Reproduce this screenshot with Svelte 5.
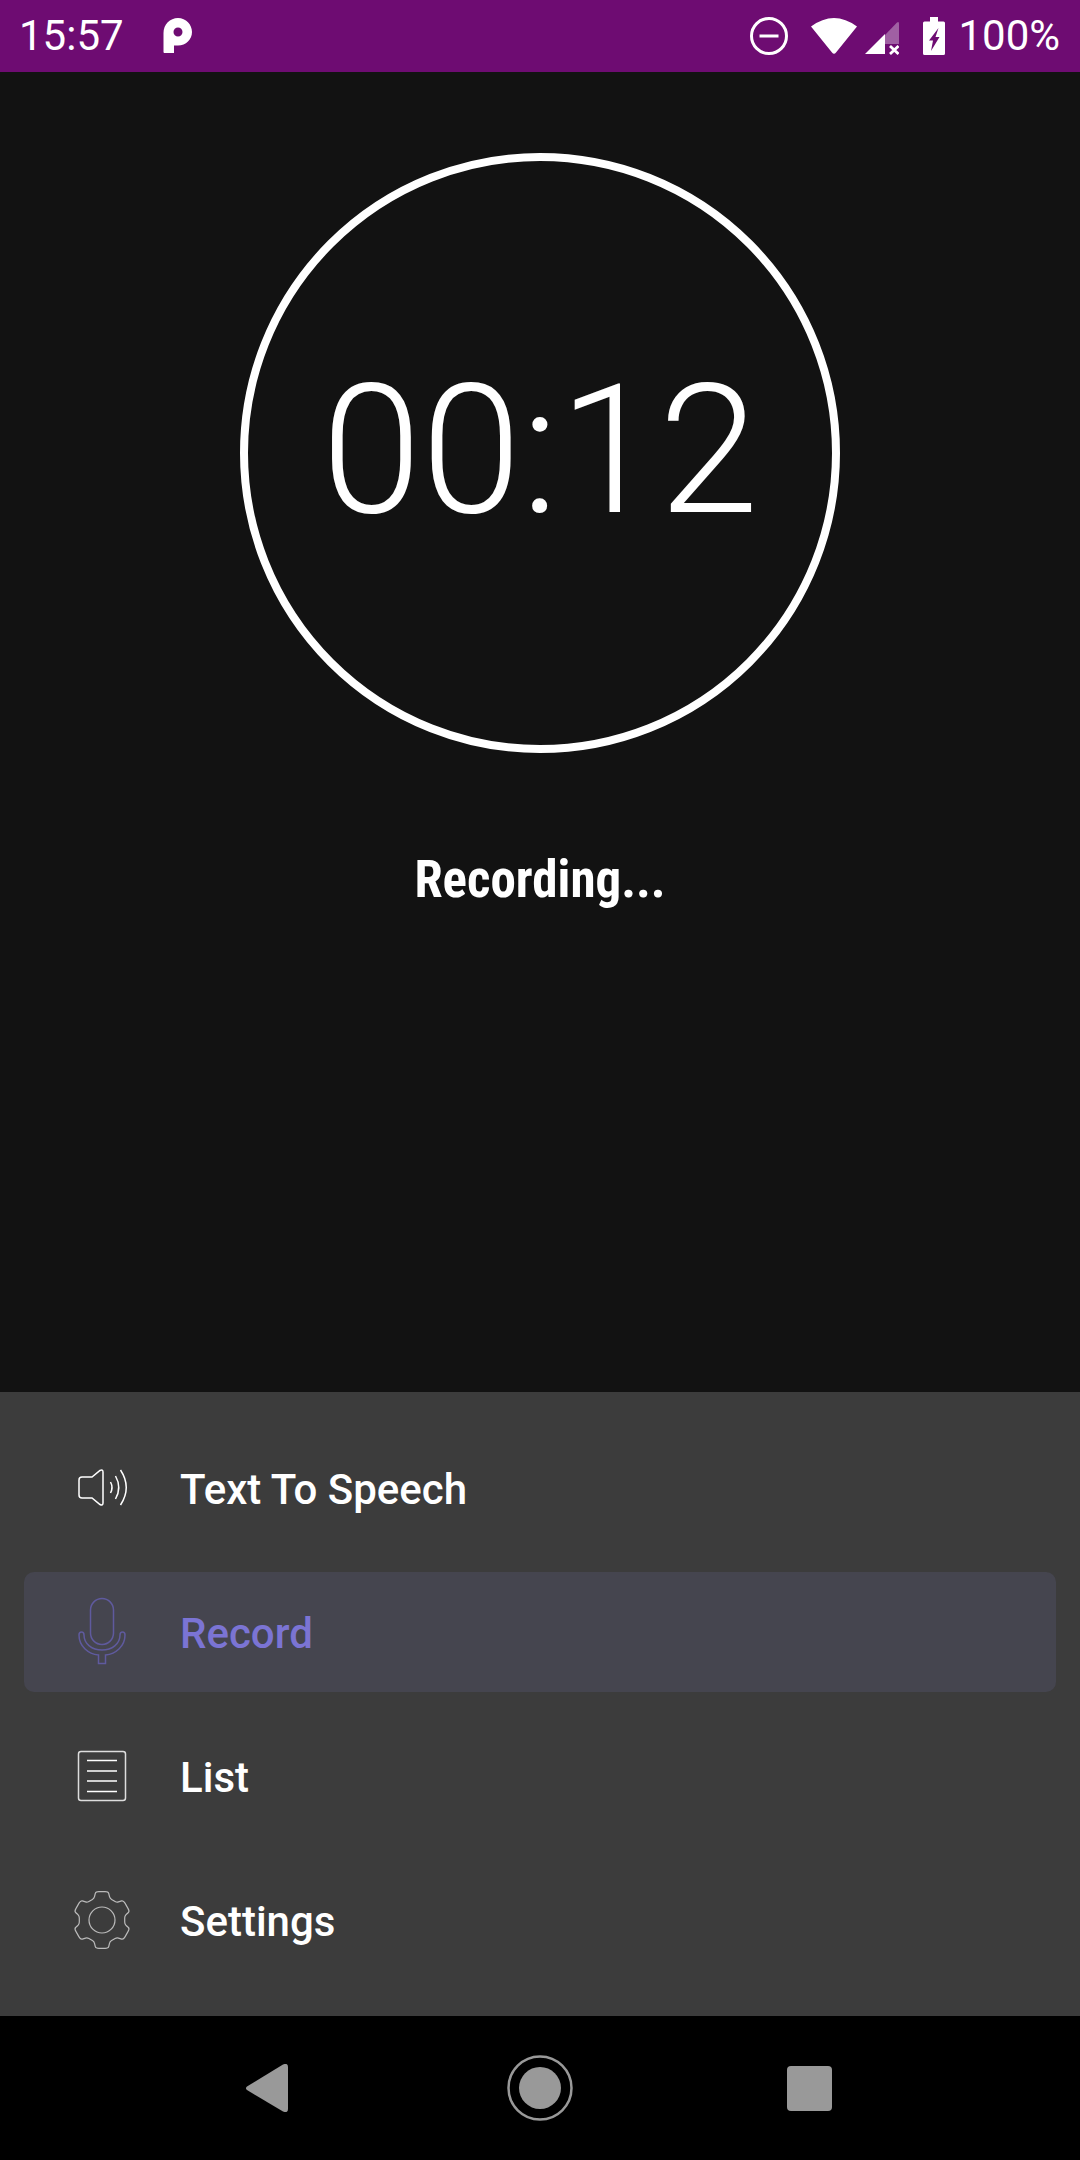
<script>
  // six-tooth gear outline with softened corners
  function gearPath(cx, cy) {
    const pts = [];
    for (let i = 0; i < 6; i++) {
      const a = (i * 60 - 90) * Math.PI / 180;
      for (const [r, d] of [[23, -20], [29, -12.5], [29, 12.5], [23, 20]]) {
        const t = a + d * Math.PI / 180;
        pts.push([cx + r * Math.cos(t), cy + r * Math.sin(t)]);
      }
    }
    const lerp = (p, q, k) => [p[0] + (q[0] - p[0]) * k, p[1] + (q[1] - p[1]) * k];
    let d = "";
    pts.forEach((p, i) => {
      const prev = pts[(i + pts.length - 1) % pts.length];
      const next = pts[(i + 1) % pts.length];
      const a = lerp(p, prev, 0.25);
      const b = lerp(p, next, 0.25);
      d += `${i ? "L" : "M"}${a[0].toFixed(1)} ${a[1].toFixed(1)}Q${p[0].toFixed(1)} ${p[1].toFixed(1)} ${b[0].toFixed(1)} ${b[1].toFixed(1)}`;
    });
    return d + "Z";
  }

  const gear = gearPath(30, 36);
  let time = "00:12";
</script>

<div class="screen">
  <header class="status">
    <div class="status-left">
      <span class="clock">15:57</span>
      <svg class="plogo" width="30" height="38" viewBox="0 0 30 38">
        <path fill="#fff" fill-rule="evenodd" d="M.5 16C.5 7.5 7 1 15 1s14 6.500 14 14-6 13.500-14 13.500h-4V36H1.500Q.5 36 .5 35ZM15 10.500a4.500 4.500 0 1 0 0 9 4.500 4.500 0 0 0 0-9Z" />
      </svg>
    </div>
    <div class="status-right">
      <svg class="dnd" width="38" height="38" viewBox="0 0 38 38">
        <circle cx="19" cy="19" r="17.500" fill="none" stroke="#fff" stroke-width="3" />
        <rect x="9.500" y="17.500" width="19" height="3" fill="#fff" />
      </svg>
      <svg class="wifi" width="46" height="38" viewBox="0 0 46 38">
        <path fill="#fff" d="M0 9.500Q23-7.500 46 9.500L25 35.500Q23 38 21 35.500Z" />
      </svg>
      <svg class="signal" width="34" height="38" viewBox="0 0 34 38">
        <path fill="#fff" fill-opacity=".35" d="M20 18 32 5.500Q34 4 34 6.500V27H20Z" />
        <path fill="#fff" d="M0 37 20 17V37Z" />
        <path stroke="#fff" stroke-width="2.800" d="M25 29 33.500 37M33.500 29 25 37" />
      </svg>
      <svg class="battery" width="22" height="38" viewBox="0 0 22 38">
        <path fill="#fff" d="M7 0H15V4.500H20.500Q22 4.500 22 6V36.500Q22 38 20.500 38H1.500Q0 38 0 36.500V6Q0 4.500 1.500 4.500H7Z" />
        <path fill="#6e0c72" d="M15.500 11 6 23.500H10L8 34 16.500 20H12.500Z" />
      </svg>
      <span class="pct">100%</span>
    </div>
  </header>

  <main class="recorder">
    <div class="dial">
      <span class="time">{time}</span>
    </div>
    <p class="state">Recording...</p>
  </main>

  <nav class="menu">
    <div class="row">
      <svg class="icon" width="60" height="72" viewBox="0 0 60 72" fill="none" stroke="#fff" stroke-width="1.500">
        <path d="M10 25H20L28 18.500Q31 17 31 20V51Q31 54 28 52.500L20 46H10Q7 46 7 43V28Q7 25 10 25Z" />
        <path d="M38.500 30Q41.500 35.500 38.500 41" />
        <path d="M43.500 24Q50 35.500 43.500 47" />
        <path d="M48.500 18Q60 35.500 48.500 53" />
      </svg>
      <span>Text To Speech</span>
    </div>
    <div class="row active">
      <svg class="icon" width="60" height="72" viewBox="0 0 60 72" fill="none" stroke="#5f5a9e" stroke-width="1.500">
        <rect x="18.500" y="2.500" width="23" height="46" rx="11.500" />
        <path d="M7 39Q7 36 9.500 36T12 39C12 48 20 54 30 54S48 48 48 39Q48 36 50.500 36T53 39C53 50 44 58 33.500 59V67.500H26.500V59C16 58 7 50 7 39Z" />
      </svg>
      <span>Record</span>
    </div>
    <div class="row">
      <svg class="icon" width="60" height="72" viewBox="0 0 60 72" fill="none" stroke="#fff" stroke-width="1.500">
        <rect x="6.500" y="11.500" width="47" height="49" rx="2.500" stroke="#ddd" />
        <path d="M15 20.500H45M15 31H45M15 41H45M15 51.500H45" />
      </svg>
      <span>List</span>
    </div>
    <div class="row">
      <svg class="icon" width="60" height="72" viewBox="0 0 60 72" fill="none" stroke="#bbb" stroke-width="1.200">
        <path d={gear} />
        <circle cx="30" cy="36" r="13" />
      </svg>
      <span>Settings</span>
    </div>
  </nav>

  <footer class="navbar">
    <svg width="42" height="48" viewBox="0 0 42 48">
      <path fill="#999" d="M1 26Q-1 24 1 22.500L37 .500Q42-1.500 42 3V45Q42 49.500 37 47.500Z" />
    </svg>
    <svg width="66" height="66" viewBox="0 0 66 66">
      <circle cx="33" cy="33" r="31.500" fill="none" stroke="#999" stroke-width="2.500" />
      <circle cx="33" cy="33" r="21" fill="#999" />
    </svg>
    <div class="square"></div>
  </footer>
</div>

<style>
  :global(body) {
    margin: 0;
    background: #121212;
  }
  .screen {
    display: flex;
    flex-direction: column;
    width: 1080px;
    height: 2160px;
    font-family: Roboto, "Liberation Sans", sans-serif;
    color: #fff;
    overflow: hidden;
  }
  .status {
    display: flex;
    justify-content: space-between;
    align-items: center;
    height: 72px;
    padding: 0 20px 0 19px;
    background: #6e0c72;
    flex: none;
  }
  .status-left,
  .status-right {
    display: flex;
    align-items: center;
  }
  .clock,
  .pct {
    font-size: 42px;
    font-weight: 450;
    line-height: 72px;
  }
  .plogo {
    margin-left: 39px;
  }
  .dnd {
    margin-right: 23px;
  }
  .wifi {
    margin-right: 8px;
  }
  .signal {
    margin-right: 24px;
  }
  .battery {
    margin-right: 13px;
  }
  .recorder {
    flex: 1;
    display: flex;
    flex-direction: column;
    align-items: center;
    background: #121212;
  }
  .dial {
    display: flex;
    align-items: center;
    justify-content: center;
    box-sizing: border-box;
    width: 600px;
    height: 600px;
    margin-top: 81px;
    padding-bottom: 4px;
    border: 8px solid #fff;
    border-radius: 50%;
  }
  .time {
    font-size: 180px;
    font-weight: 300;
    line-height: 1;
  }
  .state {
    margin: 99px 0 0;
    font-size: 51px;
    font-weight: 700;
    font-stretch: 75%;
    line-height: 56px;
  }
  .menu {
    display: flex;
    flex-direction: column;
    gap: 24px;
    padding: 36px 24px;
    background: #3c3c3c;
    flex: none;
  }
  .row {
    display: flex;
    align-items: center;
    gap: 48px;
    height: 120px;
    padding-left: 48px;
    border-radius: 10px;
    font-size: 42px;
    font-weight: 500;
  }
  .row span {
    padding-top: 2px;
  }
  .row.active {
    background: #45454f;
    color: #7b74d4;
  }
  .navbar {
    display: flex;
    align-items: center;
    height: 144px;
    padding-left: 246px;
    background: #000;
    flex: none;
  }
  .navbar svg:nth-child(2) {
    margin-left: 219px;
  }
  .square {
    width: 45px;
    height: 45px;
    margin-left: 214px;
    border-radius: 4px;
    background: #999;
  }
</style>
